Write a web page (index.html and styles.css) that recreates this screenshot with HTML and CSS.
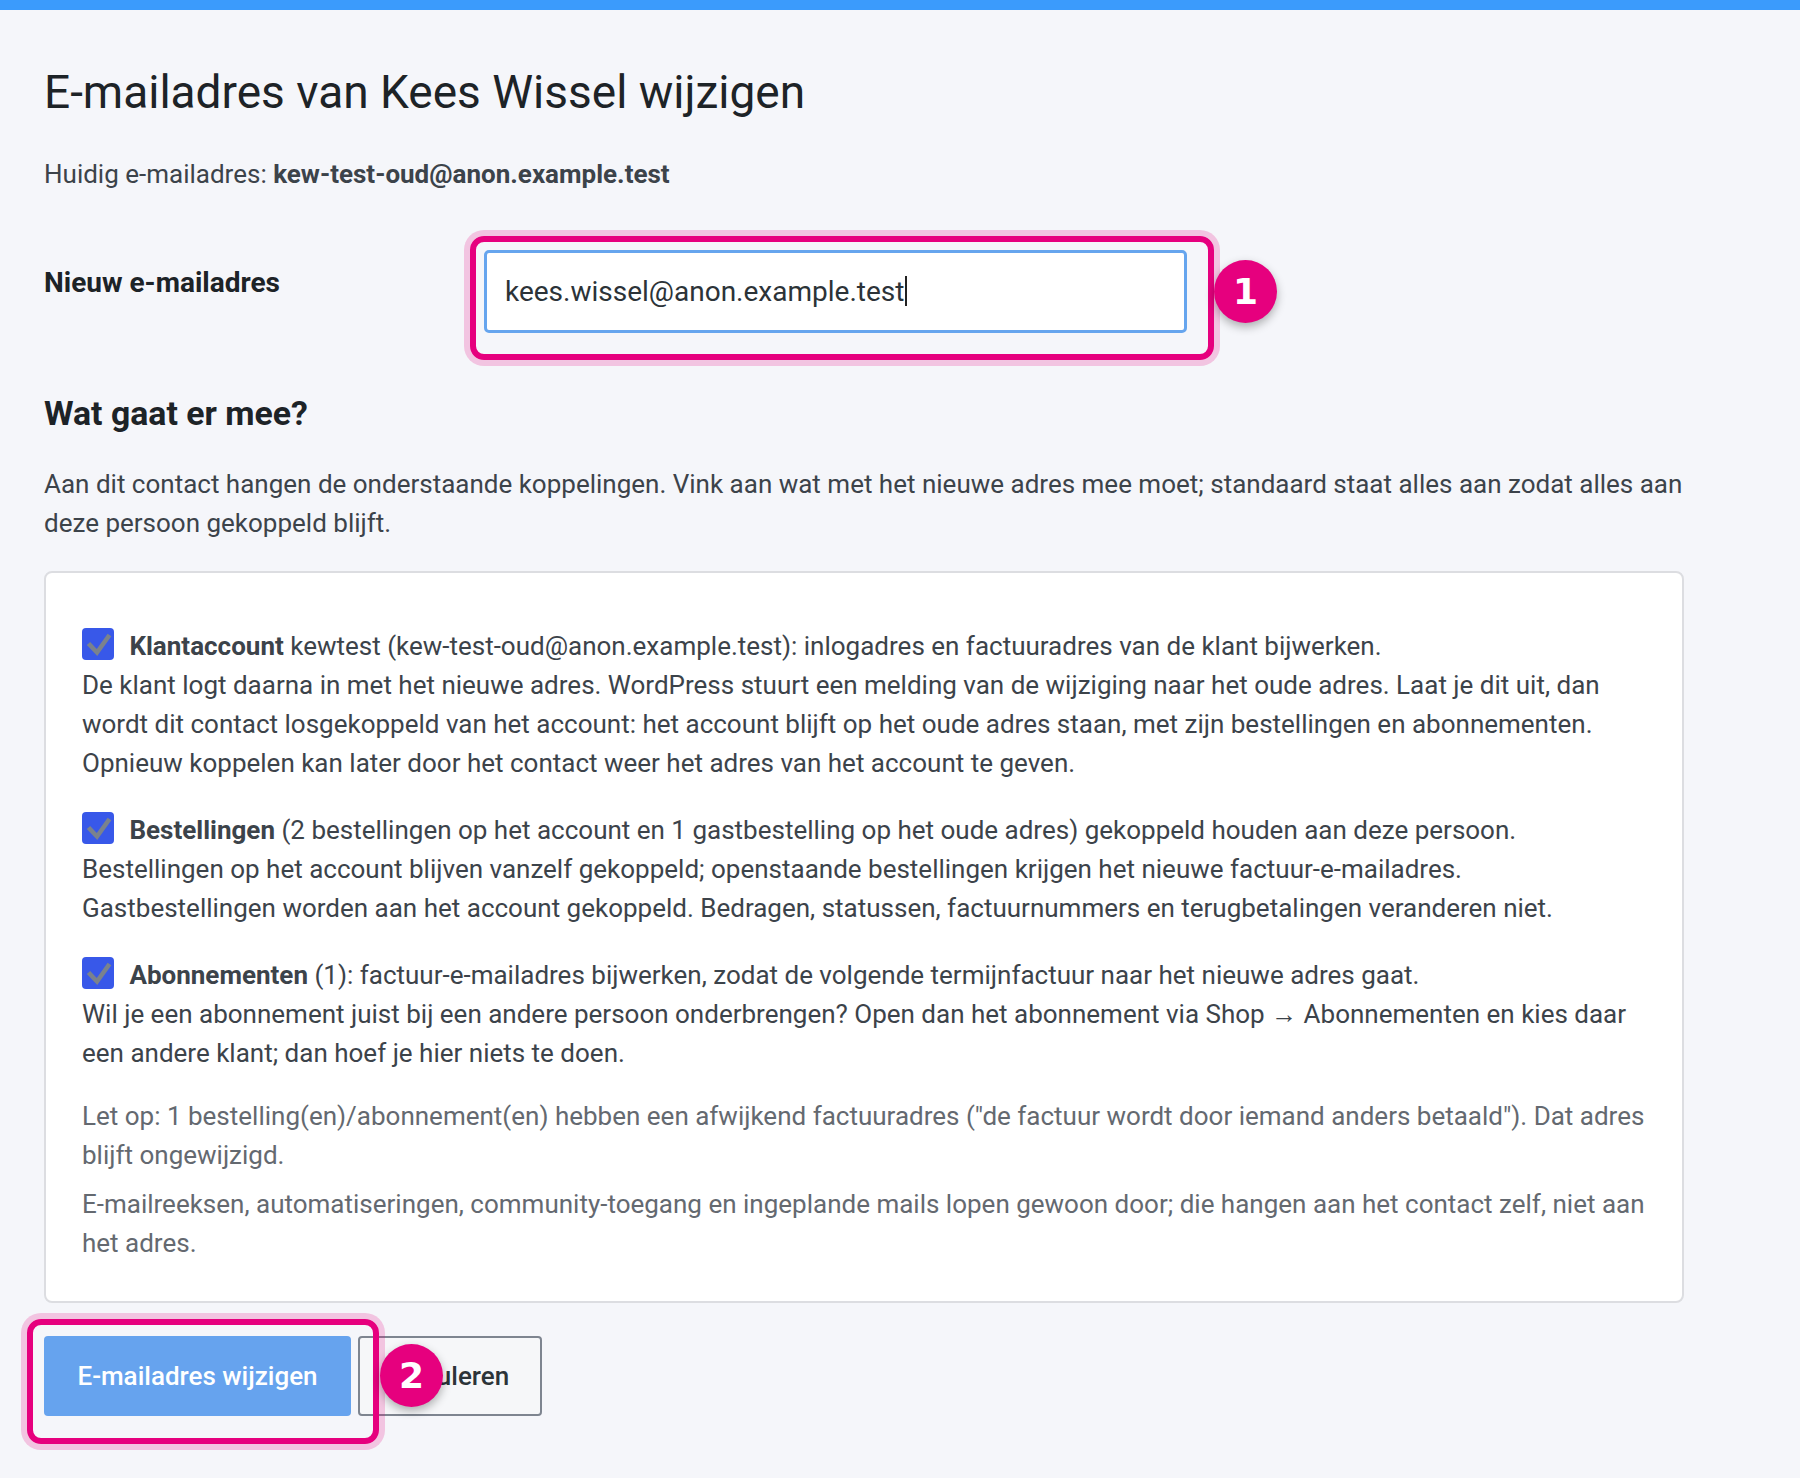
FILE: index.html
```html
<!DOCTYPE html>
<html lang="nl">
<head>
<meta charset="utf-8">
<title>E-mailadres wijzigen</title>
<link rel="stylesheet" href="styles.css">
</head>
<body>
<div class="topbar"></div>
<main class="wrap">
  <h1 class="title">E-mailadres van Kees Wissel wijzigen</h1>
  <p class="current">Huidig e-mailadres: <strong>kew-test-oud@anon.example.test</strong></p>

  <div class="field-row">
    <label class="field-label">Nieuw e-mailadres</label>
    <div class="field-control">
      <div class="input">kees.wissel@anon.example.test<span class="caret"></span></div>
      <span class="hl hl-1"></span>
      <span class="badge badge-1">1</span>
    </div>
  </div>

  <h2 class="section-title">Wat gaat er mee?</h2>
  <p class="intro">Aan dit contact hangen de onderstaande koppelingen. Vink aan wat met het nieuwe adres mee moet; standaard staat alles aan zodat alles aan deze persoon gekoppeld blijft.</p>

  <div class="card">
    <p class="item"><span class="cb"><svg viewBox="0 0 32 32" width="32" height="32"><path d="M6.5 15.5 L15 24.5 L27.5 7" fill="none" stroke="#7a828d" stroke-width="4.6"/></svg></span> <strong>Klantaccount</strong> kewtest (kew-test-oud@anon.example.test): inlogadres en factuuradres van de klant bijwerken.<br>De klant logt daarna in met het nieuwe adres. WordPress stuurt een melding van de wijziging naar het oude adres. Laat je dit uit, dan wordt dit contact losgekoppeld van het account: het account blijft op het oude adres staan, met zijn bestellingen en abonnementen. Opnieuw koppelen kan later door het contact weer het adres van het account te geven.</p>
    <p class="item"><span class="cb"><svg viewBox="0 0 32 32" width="32" height="32"><path d="M6.5 15.5 L15 24.5 L27.5 7" fill="none" stroke="#7a828d" stroke-width="4.6"/></svg></span> <strong>Bestellingen</strong> (2 bestellingen op het account en 1 gastbestelling op het oude adres) gekoppeld houden aan deze persoon.<br>Bestellingen op het account blijven vanzelf gekoppeld; openstaande bestellingen krijgen het nieuwe factuur-e-mailadres. Gastbestellingen worden aan het account gekoppeld. Bedragen, statussen, factuurnummers en terugbetalingen veranderen niet.</p>
    <p class="item"><span class="cb"><svg viewBox="0 0 32 32" width="32" height="32"><path d="M6.5 15.5 L15 24.5 L27.5 7" fill="none" stroke="#7a828d" stroke-width="4.6"/></svg></span> <strong>Abonnementen</strong> (1): factuur-e-mailadres bijwerken, zodat de volgende termijnfactuur naar het nieuwe adres gaat.<br>Wil je een abonnement juist bij een andere persoon onderbrengen? Open dan het abonnement via Shop → Abonnementen en kies daar een andere klant; dan hoef je hier niets te doen.</p>
    <p class="note note-first">Let op: 1 bestelling(en)/abonnement(en) hebben een afwijkend factuuradres ("de factuur wordt door iemand anders betaald"). Dat adres blijft ongewijzigd.</p>
    <p class="note">E-mailreeksen, automatiseringen, community-toegang en ingeplande mails lopen gewoon door; die hangen aan het contact zelf, niet aan het adres.</p>
  </div>

  <div class="actions">
    <button class="btn btn-primary" type="button">E-mailadres wijzigen</button>
    <button class="btn btn-secondary" type="button">Annuleren</button>
    <span class="hl hl-2"></span>
    <span class="badge badge-2">2</span>
  </div>
</main>
</body>
</html>
```

FILE: styles.css
```css
html, body {
  margin: 0;
  padding: 0;
}

body {
  background: #f5f6fa;
  font-family: Roboto, "Liberation Sans", Arial, sans-serif;
  font-size: 26px;
  line-height: 39px;
  color: #3c434a;
}

.topbar {
  height: 10px;
  background: #3b9bfc;
}

.wrap {
  width: 1640px;
  padding: 56px 0 40px 44px;
}

.title {
  margin: 0;
  font-size: 46px;
  line-height: 53.76px;
  font-weight: 400;
  color: #1d2327;
}

.current {
  margin: 35px 0 0;
}

.current strong {
  font-weight: 700;
}

.field-row {
  display: flex;
  margin-top: 56px;
}

.field-label {
  width: 440px;
  flex: none;
  padding-top: 13px;
  font-size: 28px;
  font-weight: 700;
  color: #1d2327;
}

.field-control {
  position: relative;
  width: 703px;
}

.input {
  box-sizing: border-box;
  height: 83px;
  padding: 0 18px;
  display: flex;
  align-items: center;
  background: #fff;
  border: 3px solid #66a5ee;
  border-radius: 5px;
  font-size: 28px;
  color: #2c3338;
}

.caret {
  display: inline-block;
  width: 1.5px;
  height: 30px;
  background: #222;
  margin-left: 1px;
}

.hl {
  position: absolute;
  border: 6px solid #e6007e;
  border-radius: 14px;
  box-shadow: 0 0 0 6px rgba(230, 0, 126, 0.2);
  pointer-events: none;
}

.hl-1 {
  left: -14px;
  top: -14px;
  right: -27px;
  bottom: -27px;
}

.badge {
  position: absolute;
  width: 63px;
  height: 63px;
  border-radius: 50%;
  background: #e6007e;
  color: #fff;
  font-family: "DejaVu Sans", Roboto, sans-serif;
  font-weight: 700;
  font-size: 36px;
  line-height: 63px;
  text-align: center;
  box-shadow: 0 4px 10px rgba(0, 0, 0, 0.3);
  z-index: 2;
}

.badge-1 {
  left: 730px;
  top: 10px;
}

.section-title {
  margin: 59px 0 0;
  font-size: 33.8px;
  line-height: 44px;
  font-weight: 700;
  color: #1d2327;
}

.intro {
  margin: 29px 0 0;
}

.card {
  margin-top: 28px;
  background: #fff;
  border: 2px solid #dcdde1;
  border-radius: 8px;
  padding: 54px 36px 38px;
}

.item {
  margin: 0 0 28px;
}

.cb {
  display: inline-block;
  width: 32px;
  height: 32px;
  border-radius: 4px;
  background: #3858e9;
  vertical-align: -5px;
  margin-right: 9px;
}

.cb svg {
  display: block;
}

.item strong {
  font-weight: 700;
}

.note {
  margin: 0;
  color: #646970;
}

.note-first {
  margin-top: -4px;
}

.note + .note {
  margin-top: 10px;
}

.actions {
  position: relative;
  display: flex;
  gap: 7px;
  margin-top: 33px;
}

.btn {
  height: 80px;
  padding: 0;
  font-family: Roboto, "Liberation Sans", Arial, sans-serif;
  font-size: 26px;
  font-weight: 500;
  border-radius: 4px;
  cursor: pointer;
  text-align: center;
}

.btn-primary {
  width: 307px;
  background: #66a3ee;
  color: #fff;
  border: none;
}

.btn-secondary {
  width: 184px;
  background: #f6f7f9;
  color: #2c3338;
  border: 2px solid #7e8590;
}

.hl-2 {
  left: -17px;
  top: -17px;
  width: 340px;
  height: 113px;
}

.badge-2 {
  left: 336px;
  top: 8px;
}
```
